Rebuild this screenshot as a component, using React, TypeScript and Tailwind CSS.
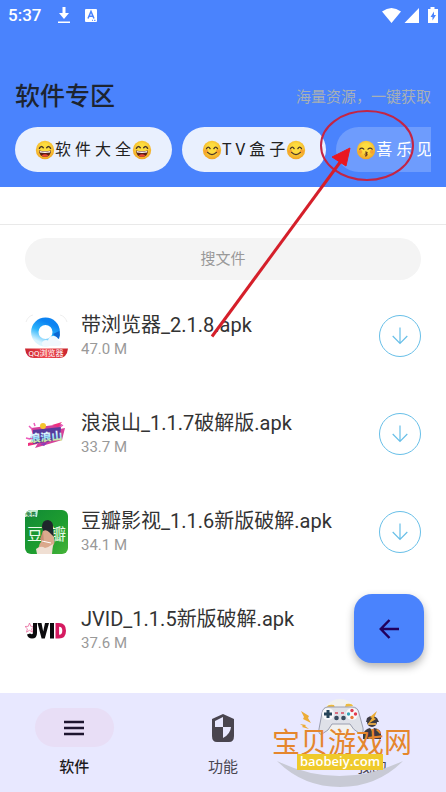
import type { ReactNode } from 'react'

type Mood = 'grin' | 'smile' | 'kiss'

function Emoji({ mood }: { mood: Mood }) {
  return (
    <svg viewBox="0 0 20 20" className="h-5 w-5 shrink-0" aria-hidden="true">
      <defs>
        <radialGradient id={`face-${mood}`} cx="50%" cy="40%" r="60%">
          <stop offset="0.4" stopColor="#fddc3f" />
          <stop offset="1" stopColor="#f0a325" />
        </radialGradient>
      </defs>
      <circle cx="10" cy="10" r="9.2" fill={`url(#face-${mood})`} />
      {mood === 'grin' && (
        <>
          <path
            d="M4.4 8.3q1.8-3.2 3.9-.5M11.7 7.8q2.1-2.7 3.9.5"
            fill="none"
            stroke="#4a3528"
            strokeWidth="1.4"
            strokeLinecap="round"
          />
          <path d="M4 10.4q6 1.2 12 0q-.3 6.4-6 6.4t-6-6.4z" fill="#5a1f12" />
          <path d="M4.6 10.9q5.4 1 10.8 0l-.4 1.6q-5 .8-10 0z" fill="#fff" />
          <path d="M6.6 15.4q3.4-2.4 6.8 0q-3.4 2.7-6.8 0z" fill="#ef4536" />
        </>
      )}
      {mood === 'smile' && (
        <>
          <circle cx="4.2" cy="11.4" r="2.1" fill="#f58a2d" opacity="0.6" />
          <circle cx="15.8" cy="11.4" r="2.1" fill="#f58a2d" opacity="0.6" />
          <path
            d="M4.5 8.6q1.8-3 3.6 0M11.9 8.6q1.8-3 3.6 0M5.6 12.4q4.4 4.4 8.8 0"
            fill="none"
            stroke="#4a3528"
            strokeWidth="1.3"
            strokeLinecap="round"
          />
        </>
      )}
      {mood === 'kiss' && (
        <>
          <circle cx="4.2" cy="11.8" r="2" fill="#f58a2d" opacity="0.6" />
          <circle cx="15.8" cy="11.8" r="2" fill="#f58a2d" opacity="0.6" />
          <path
            d="M3.8 9.2q1.9-2.2 4 0M12 9.2q2.1-2.2 4.2 0"
            fill="none"
            stroke="#4a3528"
            strokeWidth="1.2"
            strokeLinecap="round"
          />
          <path
            d="M9.6 12q2.2.2 1.2 1.4l-1 .5q1.800.2 1 1.400q-.5.7-1.400.6"
            fill="none"
            stroke="#5a2a1a"
            strokeWidth="1.1"
            strokeLinecap="round"
          />
        </>
      )}
    </svg>
  )
}

function QQBrowserIcon() {
  return (
    <svg viewBox="0 0 43 44" className="h-11 w-[43px]" aria-hidden="true">
      <defs>
        <linearGradient id="qq-ring" x1="0.7" y1="0.1" x2="0.3" y2="1">
          <stop offset="0" stopColor="#0c83f2" />
          <stop offset="0.5" stopColor="#2cb4fb" />
          <stop offset="1" stopColor="#d9f4ff" />
        </linearGradient>
        <linearGradient id="qq-bar" x1="0" y1="0" x2="1" y2="0">
          <stop offset="0" stopColor="#c9242e" />
          <stop offset="0.5" stopColor="#f04950" />
          <stop offset="1" stopColor="#c9242e" />
        </linearGradient>
      </defs>
      <path d="M1 8q2-6 7-7M35 1q5 1 7 7" fill="none" stroke="#e6e6e6" strokeWidth="0.7" />
      <circle cx="20.5" cy="18" r="10.7" fill="none" stroke="url(#qq-ring)" strokeWidth="7.4" />
      <path d="M28 20q3 4 6 5q1.500-5 .3-8z" fill="#0b66d2" />
      <path
        d="M18 32q-3-3 1-5.500q2-1 4 0q1-5 6-4.500q4 .5 4.500 4.500q4 1 2.500 4q-1 1.500-4 1.500z"
        fill="#f0f8fe"
      />
      <path d="M0 34.500h43q-1 9.500-9 9.500H9q-8 0-9-9.500z" fill="url(#qq-bar)" />
      <text
        x="21"
        y="42"
        textAnchor="middle"
        fontSize="8"
        fill="#fff"
        fontFamily="Roboto, 'Noto Sans CJK SC', sans-serif"
      >
        QQ浏览器
      </text>
    </svg>
  )
}

function LanglangIcon() {
  return (
    <svg viewBox="0 0 43 44" className="h-11 w-[43px]" aria-hidden="true">
      <defs>
        <linearGradient id="lang-text" x1="0" y1="0" x2="0" y2="1">
          <stop offset="0.2" stopColor="#fff" />
          <stop offset="0.6" stopColor="#8fe0fa" />
          <stop offset="1" stopColor="#fff04a" />
        </linearGradient>
      </defs>
      <path d="M6 16l31-4-2 5 5-1-3 12-10 3-17 5 3-5-7 1 4-4-7-1 5-3z" fill="#d6409a" />
      <path d="M3 31l12-3-3 4-9 2zM27 13l10-3-4 5z" fill="#ee2f7e" />
      <path d="M8 18l28-3-1 11-8 3-19 3z" fill="#573b9c" />
      <path d="M15 32l8-2-4 4z" fill="#8a3db8" />
      <circle cx="18" cy="14" r="3" fill="#f5c52d" />
      <path d="M4 14l3 3M9 11l1 3M38 13l-3 2M1 26l4 1" stroke="#ec5abb" strokeWidth="1.500" />
      <text
        x="21"
        y="29"
        textAnchor="middle"
        fontSize="11"
        fontWeight="900"
        fill="url(#lang-text)"
        transform="rotate(-5 21 25)"
        fontFamily="'Noto Sans CJK SC', sans-serif"
      >
        浪浪山
      </text>
    </svg>
  )
}

function DoubanIcon() {
  return (
    <svg viewBox="0 0 43 44" className="h-11 w-[43px]" aria-hidden="true">
      <defs>
        <linearGradient id="douban-bg" x1="0" y1="0" x2="1" y2="1">
          <stop offset="0" stopColor="#108a36" />
          <stop offset="0.6" stopColor="#1f9e2f" />
          <stop offset="1" stopColor="#47b439" />
        </linearGradient>
        <clipPath id="douban-clip">
          <rect width="43" height="44" rx="6" />
        </clipPath>
      </defs>
      <g clipPath="url(#douban-clip)">
        <rect width="43" height="44" fill="url(#douban-bg)" />
        <path d="M0 0h13l-1 7H0z" fill="#c7ecd2" />
        <text x="1" y="6" fontSize="5" fontWeight="700" fill="#14793a" fontFamily="'Noto Sans CJK SC', sans-serif">
          免费
        </text>
        <g fontSize="16" fill="#e9fbe9" fontFamily="'Noto Sans CJK SC', sans-serif">
          <text x="2" y="30">豆</text>
          <text x="25" y="30">瓣</text>
        </g>
        <path d="M17 17q0-7 6-7q6 1 5 9l1 8-5-4-5 1z" fill="#20272c" />
        <path d="M18 21q3-2 6 1l4 4q3 6 0 10l-3 8H15q-3-8 1-12z" fill="#dba98d" />
        <path d="M18 21l-3 8 4 4z" fill="#c88d71" />
        <path d="M11 39q5-4 9-1q4-1 8-4l-1 10H12z" fill="#f0dfd3" />
        <path d="M17 31l9 2" stroke="#fff" strokeWidth="1" />
      </g>
    </svg>
  )
}

function JvidIcon() {
  return (
    <svg viewBox="0 0 43 44" className="h-11 w-[43px]" aria-hidden="true">
      <path
        d="M4.500 15l1.300 3.300 3.500.2-2.700 2.300.9 3.400-3-1.900-3 1.900.9-3.400L0 18.500l3.300-.2z"
        fill="none"
        stroke="#e96c9f"
        strokeWidth="0.8"
      />
      <path d="M8 15h4v10q0 5.500-5 5.500-4 0-5-4l3-1q3 2 3-1z" fill="#0c0b0d" />
      <path d="M12.500 15h4l1.700 8.500L20 15h4l-4.200 15.500h-3.200z" fill="#0c0b0d" />
      <path d="M25 15h4v15.500h-4z" fill="#0c0b0d" />
      <path d="M30.500 15H34q7 0 7 7.700t-7 7.800h-3.500zm3.600 3.800v7.900q3.200 0 3.200-4t-3.200-3.900z" fill="#d51a60" fillRule="evenodd" />
    </svg>
  )
}

function DownArrow() {
  return (
    <svg viewBox="0 0 16 18" className="h-[18px] w-4" fill="none" stroke="#68bfe8" strokeWidth="1.200" aria-hidden="true">
      <path d="M8 0.500v16M0.700 9L8 16.500 15.300 9" />
    </svg>
  )
}

function Watermark() {
  return (
    <svg viewBox="0 0 146 96" className="pointer-events-none absolute right-[28px] bottom-0 h-24 w-[146px]" aria-hidden="true">
      <ellipse cx="68" cy="22" rx="18" ry="19" fill="#f1f1ef" />
      <path d="M5 65q62 30 126 0q-26 26-63 26T5 65z" fill="#c8cad5" />
      {/* game pad */}
      <g transform="translate(3 0)">
        <path d="M52 11q1-3 7-2l1 3zM70 11l1-3q6-1 7 2z" fill="#edba3e" />
        <path
          d="M53 11h24q6 0 7 6l4 15q1 7-4 5q-6-3-9-9H57q-3 7-10 10-4 1-3-5l3-16q1-6 6-6z"
          fill="#dfe1e8"
          stroke="#9a9eb0"
          strokeWidth="1"
        />
        <circle cx="53" cy="18" r="6" fill="#f8f8fb" />
        <path d="M53 14v8M49 18h8" stroke="#27455a" strokeWidth="3" />
        <circle cx="77" cy="18" r="6" fill="#f8f8fb" />
        <circle cx="77" cy="14.500" r="1.700" fill="#df3e52" />
        <circle cx="77" cy="21.500" r="1.700" fill="#e8793c" />
        <circle cx="73.500" cy="18" r="1.700" fill="#36a5ba" />
        <circle cx="80.500" cy="18" r="1.700" fill="#e33a4f" />
        <path d="M60 17h3M66 17h3" stroke="#d9495d" strokeWidth="1.500" />
        <circle cx="61.500" cy="22" r="2.300" fill="#394c60" />
        <circle cx="68.500" cy="22" r="2.300" fill="#394c60" />
      </g>
      {/* sparks */}
      <path d="M29 15l8 5-1 2 3 5-8-4 1-2zM28 28l6 1-1 1 4 3-7-2 1-1zM105 15l-7 6 2 1-4 6 8-5-2-1z" fill="#ecac36" />
      <text x="0" y="57" fontSize="28" fill="#e5862d" fontFamily="'Noto Sans CJK SC', sans-serif">
        宝贝游戏网
      </text>
      <rect x="25" y="58" width="86" height="16" fill="#efca2b" />
      <text
        x="68"
        y="70"
        textAnchor="middle"
        fontSize="13"
        fontWeight="600"
        fill="#fff"
        fontFamily="'Open Sans', sans-serif"
      >
        baobeiy.com
      </text>
    </svg>
  )
}

// hand-drawn pointer from the first file to the third category
function Pointer() {
  return (
    <svg
      viewBox="0 0 212 232"
      className="pointer-events-none absolute top-[108px] right-[28px] h-[232px] w-[212px]"
      aria-hidden="true"
    >
      <ellipse cx="161" cy="37.500" rx="46" ry="34.500" fill="none" stroke="#c32545" strokeWidth="2" />
      <path d="M6 228.500L135 53" stroke="#d51f2a" strokeWidth="3" />
      <path d="M144 40l-18 9 14 9z" fill="#ea1720" stroke="#ea1720" />
    </svg>
  )
}

const files = [
  { name: '带浏览器_2.1.8.apk', size: '47.0 M', icon: <QQBrowserIcon /> },
  { name: '浪浪山_1.1.7破解版.apk', size: '33.7 M', icon: <LanglangIcon /> },
  { name: '豆瓣影视_1.1.6新版破解.apk', size: '34.1 M', icon: <DoubanIcon /> },
  { name: 'JVID_1.1.5新版破解.apk', size: '37.6 M', icon: <JvidIcon /> },
]

const categories: { label: string; mood: Mood; active: boolean }[] = [
  { label: '软 件 大 全', mood: 'grin', active: true },
  { label: 'T V 盒 子', mood: 'smile', active: true },
  { label: '喜 乐 见 闻', mood: 'kiss', active: false },
]

function NavItem({ label, active, children }: { label: string; active?: boolean; children: ReactNode }) {
  return (
    <a href="#" className="flex flex-1 flex-col items-center gap-2">
      <span className={`flex h-[39px] w-[79px] items-center justify-center rounded-full ${active ? 'bg-[#e8def6]' : ''}`}>
        {children}
      </span>
      <span className={`text-[15px] leading-6 ${active ? 'font-medium text-[#1d1b20]' : 'text-[#49454f]'}`}>
        {label}
      </span>
    </a>
  )
}

export default function App() {
  return (
    <div className="relative flex min-h-screen flex-col overflow-hidden bg-white font-[Roboto,'Noto_Sans_CJK_SC',sans-serif]">
      <header className="bg-[#4a83fd] px-[15px] pb-[15px]">
        <div className="-mx-[7px] flex h-[30px] items-center text-white">
          <span className="text-[17px] leading-[30px] font-medium">5:37</span>
          <svg viewBox="0 0 12 17" className="ml-[17px] h-[17px] w-3" fill="currentColor" aria-hidden="true">
            <path d="M4.500 0h3v6H11l-5 6-5-6h3.500zM0 14.500h12V16H0z" />
          </svg>
          <svg viewBox="0 0 12 13" className="ml-[15px] h-[13px] w-3" aria-hidden="true">
            <rect width="12" height="13" rx="1" fill="#fff" />
            <path d="M3 9.500l3-7 3 7M4 7.300h4" fill="none" stroke="#4a83fd" strokeWidth="1.500" />
            <path d="M7 11.300h1M9 11.300h1.500" stroke="#4a83fd" />
          </svg>
          <svg viewBox="0 0 57 17" className="ml-auto h-[17px] w-[57px]" fill="currentColor" aria-hidden="true">
            <path d="M1 4.500q9.500-7 19 0L10.500 16zM38 1v15H23.500z" />
            <path d="M49.500 0h4v2H57v14H47V2h2.500zM53 4.500l-3.500 5.500h2v3.500L55 8h-2z" fillRule="evenodd" />
          </svg>
        </div>

        <div className="mt-[49px] flex items-center justify-between">
          <h1 className="text-[25px] leading-9 font-medium text-[#1d2430]">软件专区</h1>
          <p className="text-[15px] leading-9 text-[#a7b0b5]">海量资源，一键获取</p>
        </div>

        <div className="mt-3 flex gap-[10px] overflow-hidden">
          {categories.map(({ label, mood, active }) => (
            <button
              key={label}
              type="button"
              className={`flex h-[45px] shrink-0 items-center rounded-full px-5 text-base whitespace-nowrap ${
                active ? 'bg-[#e9f0fe] text-[#222]' : 'bg-[#6e9cfd] text-white'
              }`}
            >
              <Emoji mood={mood} />
              <span className="pr-px">{label}</span>
              <Emoji mood={mood} />
            </button>
          ))}
        </div>
      </header>

      <div className="h-[38px] border-b border-[#e9e9e9]" />

      <main className="flex-1 px-[25px] pt-[13px] pb-[14px]">
        <input
          type="text"
          aria-label="搜文件"
          placeholder="搜文件"
          className="block h-[42px] w-full rounded-full bg-[#f4f4f4] text-center text-[15px] text-[#333] outline-none placeholder:text-[#999]"
        />
        <ul className="mt-[7px]">
          {files.map(({ name, size, icon }) => (
            <li key={name} className="flex h-[98px] items-center">
              {icon}
              <div className="ml-[13px] min-w-0 flex-1">
                <p className="text-xl leading-[26px] whitespace-nowrap text-[#333]">{name}</p>
                <p className="text-[15px] leading-[22px] text-[#999]">{size}</p>
              </div>
              <button
                type="button"
                aria-label={`下载 ${name}`}
                className="flex h-[42px] w-[42px] items-center justify-center rounded-full border border-[#68bfe8]"
              >
                <DownArrow />
              </button>
            </li>
          ))}
        </ul>
      </main>

      <nav className="flex h-[99px] bg-[#e8e8ff] pt-[15px]">
        <NavItem label="软件" active>
          <svg viewBox="0 0 20 16" className="h-4 w-5" stroke="#1d152f" strokeWidth="2.500" aria-hidden="true">
            <path d="M0 2h20M0 8h20M0 14h20" />
          </svg>
        </NavItem>
        <NavItem label="功能">
          <svg viewBox="0 0 24 28" className="h-7 w-6" aria-hidden="true">
            <path d="M12 0l11 5v17q0 6-5 6H6q-5 0-5-6V5z" fill="#49454f" />
            <path d="M12 3v10H4V7zM12 13h8q-.5 7-8 11z" fill="#e8e8ff" />
          </svg>
        </NavItem>
        <NavItem label="我的">
          <svg viewBox="0 0 24 26" className="h-[26px] w-6" fill="#3d3a43" aria-hidden="true">
            <circle cx="12" cy="7" r="5" />
            <path d="M7 3q5-4 10 0l2 4H6zM3 24v-5q2-5 7-6l2 3 2-3q7 1 7 6v5z" />
            <path d="M8 8h8v2H8z" fill="#d8a14a" />
          </svg>
        </NavItem>
      </nav>

      <button
        type="button"
        aria-label="返回"
        className="absolute right-[22px] bottom-[129px] flex h-[69px] w-[70px] items-center justify-center rounded-[18px] bg-[#4a83fd] shadow-[0_4px_9px_rgba(0,0,0,0.3)]"
      >
        <svg viewBox="0 0 20 20" className="h-5 w-5" fill="none" stroke="#21005d" strokeWidth="2.500" aria-hidden="true">
          <path d="M20 10H2M10.500 1L1.800 10l8.700 9" />
        </svg>
      </button>

      <Watermark />
      <Pointer />
    </div>
  )
}
